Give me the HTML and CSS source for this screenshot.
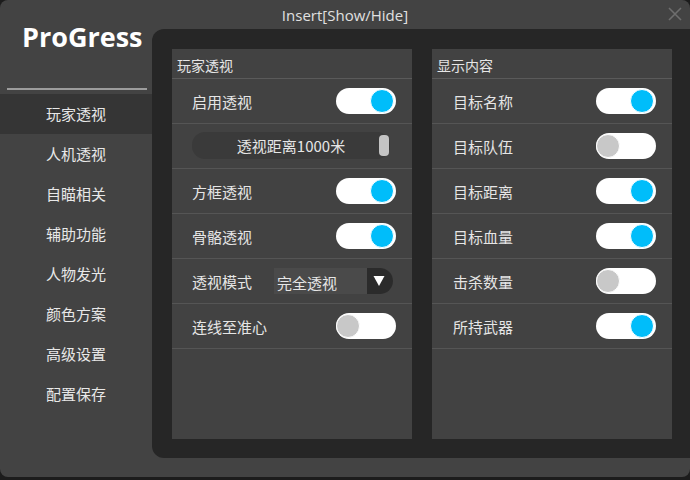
FILE: index.html
```html
<!DOCTYPE html>
<html>
<head>
<meta charset="utf-8">
<link rel="stylesheet" href="styles.css">
</head>
<body>
<div class="window">
  <div class="titlebar">
    <span class="title">Insert[Show/Hide]</span>
    <svg class="close" width="14" height="14" viewBox="0 0 14 14"><path d="M1 1 L13 13 M13 1 L1 13" stroke="#6e6e6e" stroke-width="1.6" fill="none"/></svg>
  </div>
  <aside class="sidebar">
    <div class="logo">ProGress</div>
    <div class="sep"></div>
    <nav class="menu">
      <div class="item active">玩家透视</div>
      <div class="item">人机透视</div>
      <div class="item">自瞄相关</div>
      <div class="item">辅助功能</div>
      <div class="item">人物发光</div>
      <div class="item">颜色方案</div>
      <div class="item">高级设置</div>
      <div class="item">配置保存</div>
    </nav>
  </aside>
  <main class="main">
    <div class="panel">
      <section class="card">
        <div class="card-head">玩家透视</div>
        <div class="row"><span class="label">启用透视</span><span class="toggle on"><span class="knob"></span></span></div>
        <div class="row"><div class="slider"><span class="slider-text">透视距离1000米</span><span class="handle"></span></div></div>
        <div class="row"><span class="label">方框透视</span><span class="toggle on"><span class="knob"></span></span></div>
        <div class="row"><span class="label">骨骼透视</span><span class="toggle on"><span class="knob"></span></span></div>
        <div class="row"><span class="label">透视模式</span><div class="combo"><span class="combo-text">完全透视</span><span class="combo-btn"><svg width="12" height="12" viewBox="0 0 12 12"><path d="M0.5 1 L11.5 1 L6 11 Z" fill="#ffffff"/></svg></span></div></div>
        <div class="row"><span class="label">连线至准心</span><span class="toggle"><span class="knob"></span></span></div>
      </section>
      <section class="card">
        <div class="card-head">显示内容</div>
        <div class="row r2"><span class="label">目标名称</span><span class="toggle on"><span class="knob"></span></span></div>
        <div class="row r2"><span class="label">目标队伍</span><span class="toggle"><span class="knob"></span></span></div>
        <div class="row r2"><span class="label">目标距离</span><span class="toggle on"><span class="knob"></span></span></div>
        <div class="row r2"><span class="label">目标血量</span><span class="toggle on"><span class="knob"></span></span></div>
        <div class="row r2"><span class="label">击杀数量</span><span class="toggle"><span class="knob"></span></span></div>
        <div class="row r2"><span class="label">所持武器</span><span class="toggle on"><span class="knob"></span></span></div>
      </section>
    </div>
  </main>
</div>
</body>
</html>
```

FILE: styles.css
```css
* { box-sizing: border-box; }
html, body { margin: 0; padding: 0; }
body {
  background: #1c1c1c;
  width: 690px;
  height: 480px;
  overflow: hidden;
  font-family: "Noto Sans CJK SC", "Noto Sans", sans-serif;
  color: #e6e6e6;
}
.window {
  position: relative;
  width: 690px;
  height: 477px;
  background: #434343;
  border-radius: 8px;
  display: flex;
}
.titlebar {
  position: absolute;
  left: 0;
  right: 0;
  top: 0;
  height: 29px;
  text-align: center;
  padding-top: 2px;
}
.title {
  font-family: "Open Sans", "Noto Sans", sans-serif;
  font-size: 15px;
  line-height: 27px;
  color: #e0e0e0;
}
.close {
  position: absolute;
  right: 8px;
  top: 7px;
}
.sidebar {
  width: 152px;
  flex: none;
  display: flex;
  flex-direction: column;
}
.logo {
  height: 88px;
  padding: 19px 0 0 22px;
  font-family: "Open Sans", "Noto Sans", sans-serif;
  font-weight: 700;
  font-size: 27px;
  line-height: 36px;
  color: #ffffff;
}
.sep {
  height: 2px;
  margin: 0 5px 0 7px;
  background: #9c9c9c;
}
.menu {
  margin-top: 4px;
  display: flex;
  flex-direction: column;
}
.item {
  height: 40px;
  line-height: 40px;
  text-align: center;
  font-size: 15px;
  color: #e8e8e8;
}
.item.active { background: #353535; }
.main {
  flex: 1;
  display: flex;
  flex-direction: column;
  padding: 29px 0 19px 0;
}
.panel {
  flex: 1;
  background: #262626;
  border-radius: 12px 0 0 12px;
  padding: 20px 18px 19px 20px;
  display: flex;
  gap: 20px;
}
.card {
  width: 240px;
  background: #424242;
  display: flex;
  flex-direction: column;
}
.card-head {
  height: 30px;
  padding: 3px 0 0 5px;
  line-height: 26px;
  font-size: 14px;
  color: #e6e6e6;
  border-bottom: 1px solid #5a5a5a;
}
.row {
  height: 45px;
  flex: none;
  border-bottom: 1px solid #555555;
  display: flex;
  align-items: center;
  justify-content: space-between;
  padding: 0 16px 0 20px;
}
.row.r2 { padding-left: 21px; }
.label {
  font-size: 15px;
  color: #e6e6e6;
}
.toggle {
  width: 60px;
  height: 26px;
  border-radius: 13px;
  background: #ffffff;
  display: flex;
  align-items: center;
  justify-content: flex-start;
  padding: 0 2px 0 0;
}
.toggle.on { justify-content: flex-end; }
.knob {
  width: 24px;
  height: 24px;
  border-radius: 50%;
  background: #c8c8c8;
  border: 1px solid #ffffff;
}
.toggle.on .knob { background: #00bdfa; }
.slider {
  width: 198px;
  height: 27px;
  border-radius: 13px;
  background: #3a3a3a;
  display: flex;
  align-items: center;
  justify-content: center;
  position: relative;
  margin-top: -1px;
}
.slider-text {
  font-size: 15px;
  color: #e6e6e6;
}
.handle {
  position: absolute;
  right: 1px;
  top: 3px;
  width: 10px;
  height: 21px;
  border-radius: 4px;
  background: #c4c4c4;
}
.combo {
  width: 119px;
  height: 26px;
  margin-right: 3px;
  background: #4a4a4a;
  border-radius: 0 13px 13px 0;
  display: flex;
  align-items: center;
  justify-content: space-between;
}
.combo-text {
  font-size: 15px;
  padding-left: 3px;
  padding-top: 3px;
  color: #e6e6e6;
}
.combo-btn {
  width: 26px;
  height: 26px;
  background: #2b2b2b;
  border-radius: 0 13px 13px 0;
  display: flex;
  align-items: center;
  justify-content: center;
  padding-right: 2px;
}
```
